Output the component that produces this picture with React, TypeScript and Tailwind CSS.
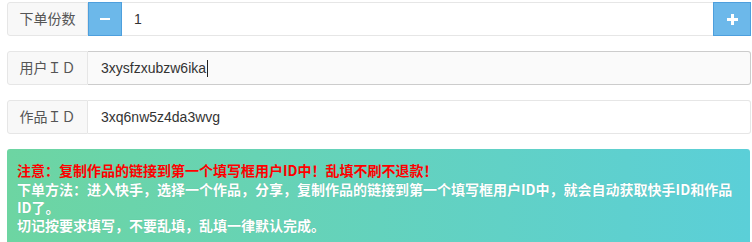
import React from "react";

const font = { fontFamily: '"Liberation Sans", Arial, "Noto Sans CJK SC", sans-serif' };

function Label({ text }: { text: string }) {
  return (
    <div className="flex w-[81px] shrink-0 items-center justify-center rounded-l-[3px] border border-[#e6e6e6] bg-[#f8f8f8] text-[14px] text-[#555]">
      {text}
    </div>
  );
}

export default function App() {
  return (
    <div className="min-h-[242px] bg-white pt-[2px]" style={font}>
      <div className="ml-[7px] flex w-[744px] flex-col gap-[15px]">
        {/* 下单份数 */}
        <div className="flex h-[34px]">
          <Label text="下单份数" />
          <button className="flex w-[34px] shrink-0 items-center justify-center border border-[#4d9fdd] bg-[#6cb8ea]">
            <span className="block h-[2.5px] w-[10px] bg-white" />
          </button>
          <div className="flex flex-1 items-center border-y border-[#e6e6e6] bg-white pl-[12px] text-[14px] text-[#333]">
            1
          </div>
          <button className="flex w-[38px] shrink-0 items-center justify-center border border-[#4d9fdd] bg-[#6cb8ea]">
            <svg width="11" height="11" viewBox="0 0 11 11">
              <path d="M4 0h3v4h4v3H7v4H4V7H0V4h4z" fill="#fff" />
            </svg>
          </button>
        </div>

        {/* 用户ID */}
        <div className="flex h-[34px]">
          <Label text="用户ＩＤ" />
          <div className="flex flex-1 items-center rounded-r-[3px] border border-l-0 border-[#ccc] bg-[#fafafa] pl-[13px] text-[14px] text-[#333]">
            3xysfzxubzw6ika
            <span className="ml-[1px] inline-block h-[17px] w-px bg-[#222]" />
          </div>
        </div>

        {/* 作品ID */}
        <div className="flex h-[34px]">
          <Label text="作品ＩＤ" />
          <div className="flex flex-1 items-center rounded-r-[3px] border border-l-0 border-[#e6e6e6] bg-white pl-[13px] text-[14px] text-[#333]">
            3xq6nw5z4da3wvg
          </div>
        </div>

        {/* 提示 */}
        <div
          className="flex w-[743px] flex-col rounded-t-[3px] bg-[linear-gradient(to_right,#6dd5a2,#5bcfd8)] px-[10px] pb-[12px] pt-[12px] text-[14px] font-bold leading-[18px] text-white"
          style={{ fontFamily: '"Noto Sans CJK SC", "Liberation Sans", sans-serif' }}
        >
          <p className="mb-[1px] text-[#ff0000]">注意：复制作品的链接到第一个填写框用户ID中！乱填不刷不退款！</p>
          <p className="[text-shadow:0_0_1px_rgba(0,0,0,0.15)]">
            下单方法：进入快手，选择一个作品，分享，复制作品的链接到第一个填写框用户ID中，就会自动获取快手ID和作品ID了。
          </p>
          <p className="[text-shadow:0_0_1px_rgba(0,0,0,0.15)]">切记按要求填写，不要乱填，乱填一律默认完成。</p>
        </div>
      </div>
    </div>
  );
}
